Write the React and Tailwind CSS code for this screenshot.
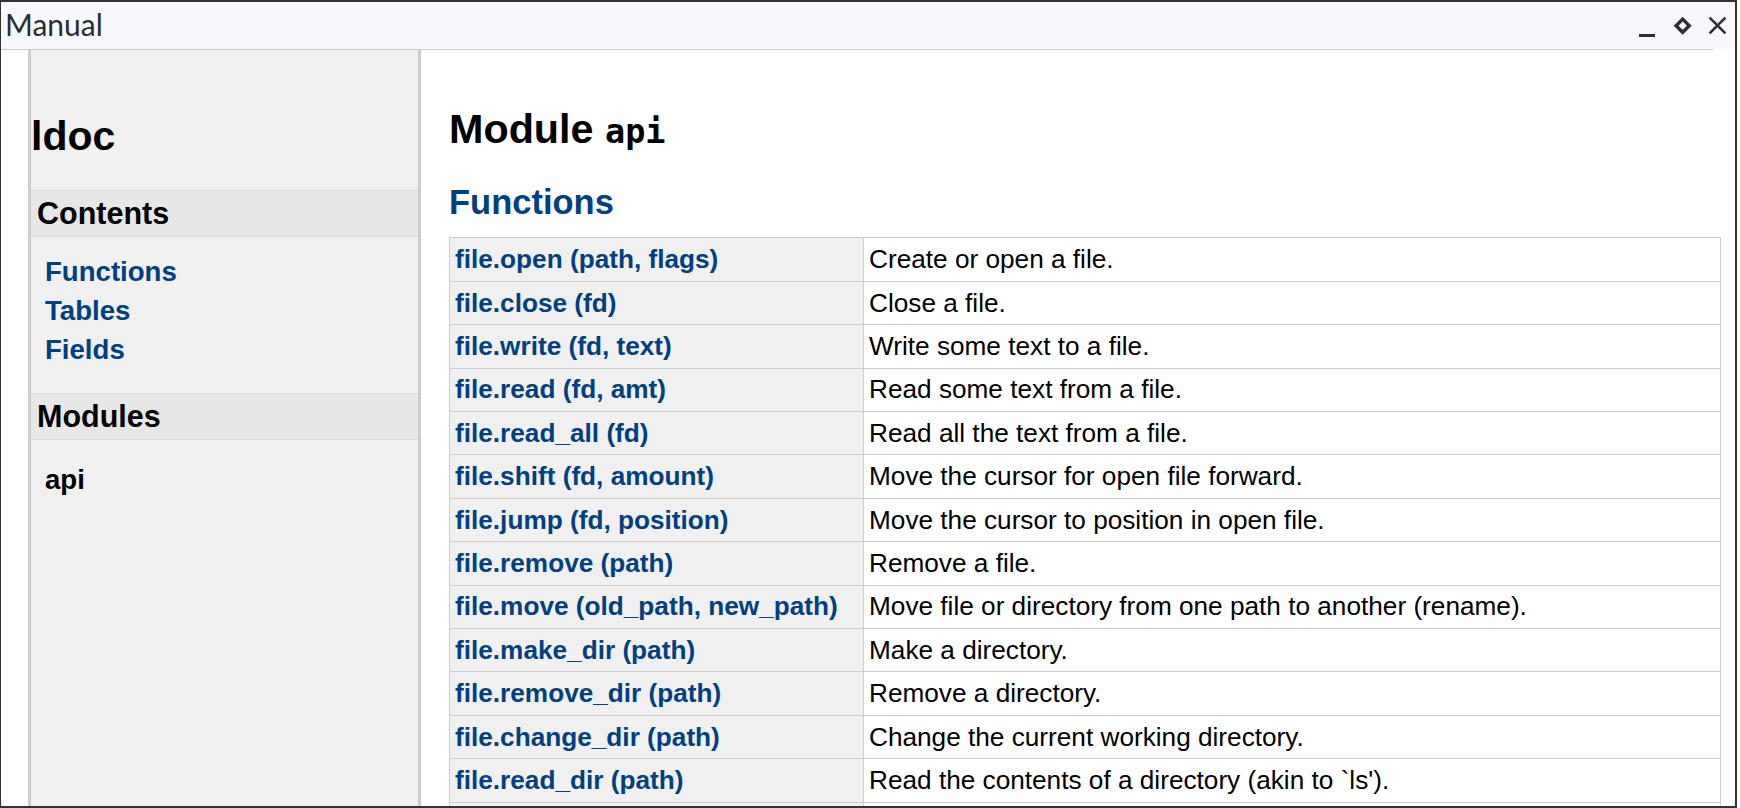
import React from "react";

const rows = [
  ["file.open (path, flags)", "Create or open a file."],
  ["file.close (fd)", "Close a file."],
  ["file.write (fd, text)", "Write some text to a file."],
  ["file.read (fd, amt)", "Read some text from a file."],
  ["file.read_all (fd)", "Read all the text from a file."],
  ["file.shift (fd, amount)", "Move the cursor for open file forward."],
  ["file.jump (fd, position)", "Move the cursor to position in open file."],
  ["file.remove (path)", "Remove a file."],
  ["file.move (old_path, new_path)", "Move file or directory from one path to another (rename)."],
  ["file.make_dir (path)", "Make a directory."],
  ["file.remove_dir (path)", "Remove a directory."],
  ["file.change_dir (path)", "Change the current working directory."],
  ["file.read_dir (path)", "Read the contents of a directory (akin to `ls')."],
  ["", ""],
];

function WindowButtons() {
  return (
    <svg width="96" height="47" viewBox="0 0 96 47" className="shrink-0">
      <rect x="5" y="32" width="16" height="3" fill="#2b2e33" />
      <polygon
        points="48.7,17.1 55.3,23.7 48.7,30.3 42.1,23.7"
        fill="none"
        stroke="#2b2e33"
        strokeWidth="3.4"
      />
      <path
        d="M75.6 15.6 L91.4 31.4 M75.6 31.4 L91.4 15.6"
        stroke="#2b2e33"
        strokeWidth="2.6"
        fill="none"
      />
    </svg>
  );
}

export default function App() {
  return (
    <div className="w-[1740px] h-[808px] bg-white overflow-hidden font-['Liberation_Sans',Arial,sans-serif] text-black">
      <div className="w-[1737px] h-[808px] border-l border-t-2 border-r-2 border-b-2 border-[#333] flex flex-col overflow-hidden">
        {/* title bar */}
        <div className="h-[47px] shrink-0 bg-[#f7f8fd] flex items-stretch pr-[5px]">
          <div className="pl-[4px] pt-[7px] leading-[30px] text-[30px] font-['Lato',sans-serif] text-[#2b2d33]">
            Manual
          </div>
          <div className="ml-auto">
            <WindowButtons />
          </div>
        </div>
        <div className="h-px w-[1712px] shrink-0 bg-[#c8c8cf]" />

        {/* body */}
        <div className="flex flex-1 min-h-0">
          <div className="w-[27px] shrink-0" />
          {/* sidebar */}
          <div className="w-[393px] shrink-0 border-l-[3px] border-r-[3px] border-[#cccccc] bg-[#f0f0f0]">
            <h1 className="mt-[62px] text-[41px] leading-[48px] font-bold">ldoc</h1>
            <h2 className="mt-[30px] border-y border-[#dddddd] bg-[#e7e7e7] pl-[6px] text-[30.5px] leading-[45.4px] font-bold">
              Contents
            </h2>
            <ul className="mt-[18px] flex flex-col gap-[5.5px]">
              {["Functions", "Tables", "Fields"].map((t) => (
                <li key={t} className="pl-[14px] text-[27.6px] leading-[33.5px] font-bold text-[#004080]">
                  {t}
                </li>
              ))}
            </ul>
            <h2 className="mt-[26px] border-y border-[#dddddd] bg-[#e7e7e7] pl-[6px] text-[30.5px] leading-[45.4px] font-bold">
              Modules
            </h2>
            <ul className="mt-[23px]">
              <li className="pl-[14px] text-[27.6px] leading-[33.5px] font-bold">api</li>
            </ul>
          </div>

          {/* main */}
          <div className="flex-1 min-w-0 pl-[28px]">
            <h1 className="mt-[55.3px] text-[41.3px] leading-[48px] font-bold">
              Module{" "}
              <code className="font-['DejaVu_Sans_Mono',monospace] text-[33.5px] leading-none font-bold">api</code>
            </h1>
            <h2 className="mt-[28.7px] text-[34.5px] leading-[40px] font-bold text-[#004080]">
              Functions
            </h2>
            <div className="mt-[15.5px] w-[1272px] border-t border-l border-r border-[#cccccc]">
              {rows.map(([name, desc], i) => (
                <div key={i} className="flex h-[43.4px] border-b border-[#cccccc]">
                  <div className="w-[414px] shrink-0 border-r border-[#cccccc] bg-[#f0f0f0] pl-[5px] pt-[5.8px] text-[26.2px] leading-[31.2px] font-bold text-[#004080] whitespace-nowrap">
                    {name}
                  </div>
                  <div className="flex-1 pl-[5px] pt-[5.8px] text-[26.2px] leading-[31.2px] whitespace-nowrap">
                    {desc}
                  </div>
                </div>
              ))}
            </div>
          </div>
        </div>
      </div>
    </div>
  );
}
